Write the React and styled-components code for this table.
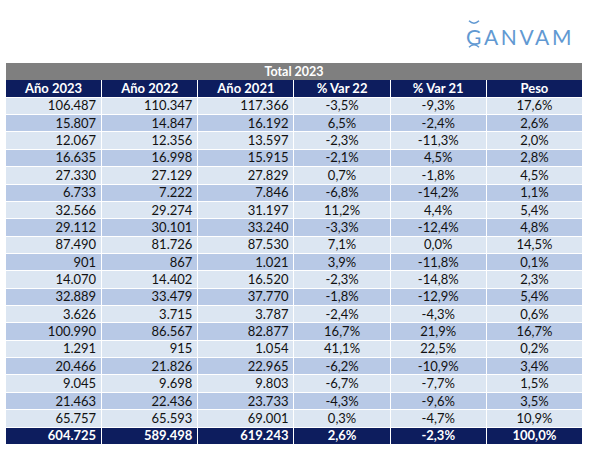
import React from "react";
import styled, { createGlobalStyle } from "styled-components";

const Global = createGlobalStyle`
  html, body { margin: 0; padding: 0; background: #fff; }
  body { font-family: Lato, "Open Sans", sans-serif; }
`;

const Page = styled.div`
  width: 612px;
  height: 450px;
  display: flex;
  flex-direction: column;
  padding: 0 30px 0 6px;
  box-sizing: border-box;
`;

const LogoBar = styled.div`
  height: 63px;
  display: flex;
  justify-content: flex-end;
  align-items: flex-start;
  padding-top: 22px;
  box-sizing: border-box;
  padding-right: 8px;
`;

const Logo = styled.div`
  display: flex;
  align-items: center;
  font-family: Lato, "Open Sans", sans-serif;
  font-weight: 400;
  font-size: 21px;
  letter-spacing: 2.6px;
  color: #6199d2;
  line-height: 1;
  padding-top: 4px;
`;

const LogoG = styled.span`
  position: relative;
  display: inline-block;
`;

const Arc = styled.svg`
  position: absolute;
  left: 2px;
  width: 12px;
  height: 5px;
  top: ${(p) => (p.$below ? "17px" : "-6px")};
`;

const Grid = styled.div`
  display: grid;
  width: 576px;
  grid-template-columns: repeat(6, 1fr);
  grid-auto-rows: 16.36px;
  gap: 1px;
  background: #fff;
`;

const Title = styled.div`
  grid-column: 1 / -1;
  background: #7f7f7f;
  color: #fff;
  font-weight: 700;
  font-size: 12.5px;
  display: flex;
  align-items: center;
  justify-content: center;
  margin-bottom: -1px;
`;

const Cell = styled.div`
  display: flex;
  align-items: center;
  justify-content: ${(p) => (p.$right ? "flex-end" : "center")};
  padding: 0 5px;
  font-size: 13px;
  line-height: 1;
  white-space: nowrap;
  color: ${(p) => (p.$dark ? "#fff" : "#111")};
  font-weight: ${(p) => (p.$bold ? 700 : 400)};
  background: ${(p) => p.$bg};
`;

const headers = ["Año 2023", "Año 2022", "Año 2021", "% Var 22", "% Var 21", "Peso"];

const rows = [
  ["106.487", "110.347", "117.366", "-3,5%", "-9,3%", "17,6%"],
  ["15.807", "14.847", "16.192", "6,5%", "-2,4%", "2,6%"],
  ["12.067", "12.356", "13.597", "-2,3%", "-11,3%", "2,0%"],
  ["16.635", "16.998", "15.915", "-2,1%", "4,5%", "2,8%"],
  ["27.330", "27.129", "27.829", "0,7%", "-1,8%", "4,5%"],
  ["6.733", "7.222", "7.846", "-6,8%", "-14,2%", "1,1%"],
  ["32.566", "29.274", "31.197", "11,2%", "4,4%", "5,4%"],
  ["29.112", "30.101", "33.240", "-3,3%", "-12,4%", "4,8%"],
  ["87.490", "81.726", "87.530", "7,1%", "0,0%", "14,5%"],
  ["901", "867", "1.021", "3,9%", "-11,8%", "0,1%"],
  ["14.070", "14.402", "16.520", "-2,3%", "-14,8%", "2,3%"],
  ["32.889", "33.479", "37.770", "-1,8%", "-12,9%", "5,4%"],
  ["3.626", "3.715", "3.787", "-2,4%", "-4,3%", "0,6%"],
  ["100.990", "86.567", "82.877", "16,7%", "21,9%", "16,7%"],
  ["1.291", "915", "1.054", "41,1%", "22,5%", "0,2%"],
  ["20.466", "21.826", "22.965", "-6,2%", "-10,9%", "3,4%"],
  ["9.045", "9.698", "9.803", "-6,7%", "-7,7%", "1,5%"],
  ["21.463", "22.436", "23.733", "-4,3%", "-9,6%", "3,5%"],
  ["65.757", "65.593", "69.001", "0,3%", "-4,7%", "10,9%"],
];

const total = ["604.725", "589.498", "619.243", "2,6%", "-2,3%", "100,0%"];

const NAVY = "#0d1d5e";
const LIGHT = "#dce6f2";
const MID = "#b8c9e6";

export default function App() {
  return (
    <>
      <Global />
      <Page>
        <LogoBar>
          <Logo>
            <LogoG>
              <Arc viewBox="0 0 12 5">
                <path d="M1 0.8 Q6 5.6 11 0.8" fill="none" stroke="#6199d2" strokeWidth="1.5" />
              </Arc>
              G
              <Arc $below viewBox="0 0 12 5">
                <path d="M1 4.2 Q6 -0.6 11 4.2" fill="none" stroke="#6199d2" strokeWidth="1.5" />
              </Arc>
            </LogoG>
            ANVAM
          </Logo>
        </LogoBar>
        <Grid>
          <Title>Total 2023</Title>
          {headers.map((h) => (
            <Cell key={h} $bg={NAVY} $dark $bold>
              {h}
            </Cell>
          ))}
          {rows.map((r, i) =>
            r.map((v, j) => (
              <Cell key={i + "-" + j} $bg={i % 2 === 0 ? LIGHT : MID} $right={j < 3}>
                {v}
              </Cell>
            ))
          )}
          {total.map((v, j) => (
            <Cell key={"t" + j} $bg={NAVY} $dark $bold $right={j < 3}>
              {v}
            </Cell>
          ))}
        </Grid>
      </Page>
    </>
  );
}
